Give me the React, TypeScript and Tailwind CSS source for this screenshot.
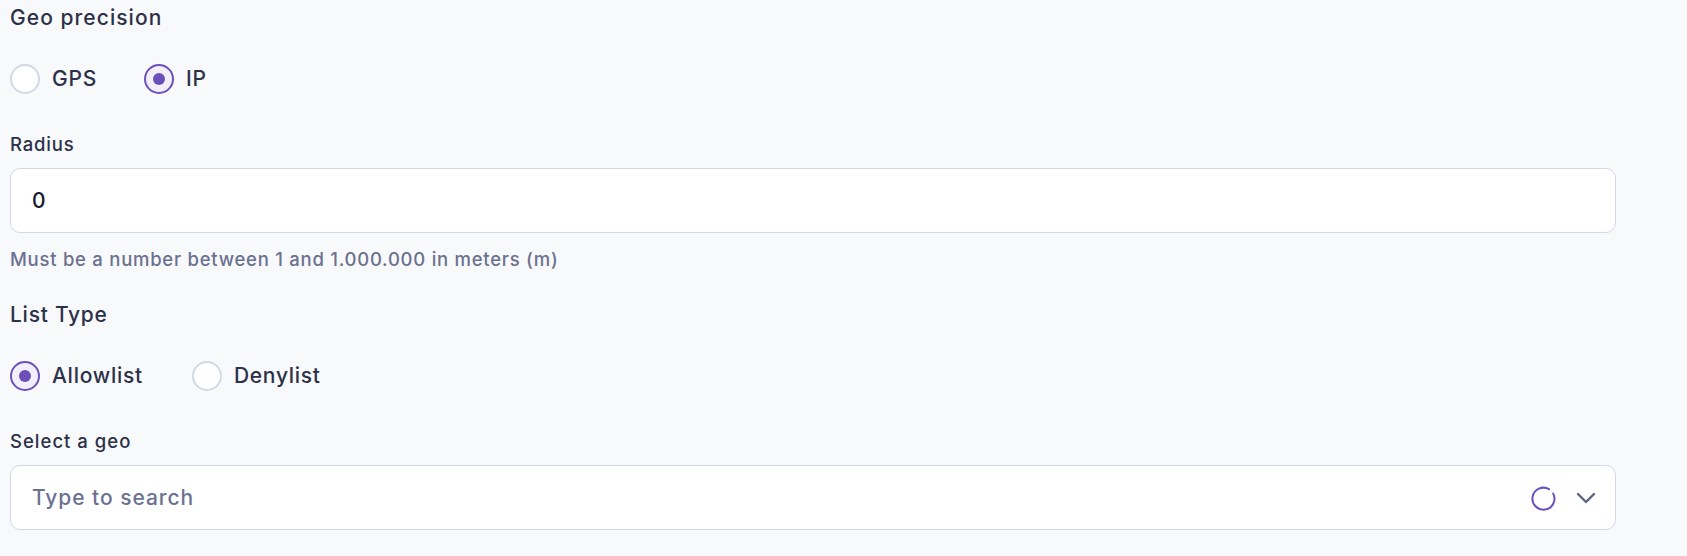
import { useState } from 'react'

function Radio({ label, checked, onClick }: { label: string; checked: boolean; onClick: () => void }) {
	return (
		<button type="button" onClick={onClick} className="flex items-center gap-[12px]">
			{checked ? (
				<span className="flex h-[30px] w-[30px] items-center justify-center rounded-full border-2 border-[#6b51b9] bg-[#f2effb]">
					<span className="h-[12px] w-[12px] rounded-full bg-[#6a50b8]" />
				</span>
			) : (
				<span className="h-[30px] w-[30px] rounded-full border-2 border-[#d3d8e7] bg-white" />
			)}
			<span className="text-[21px] leading-[28px] tracking-[0.035em] text-[#2c3149]">{label}</span>
		</button>
	)
}

function Spinner() {
	return (
		<svg width="26" height="26" viewBox="0 0 26 26" fill="none">
			<path d="M19 4.2 A11 11 0 1 0 23.2 8.6" stroke="#6a50c0" strokeWidth="2" strokeLinecap="round" />
		</svg>
	)
}

export default function App() {
	const [precision, setPrecision] = useState('ip')
	const [listType, setListType] = useState('allow')

	return (
		<div className="min-h-screen bg-[#f8f9fb] px-[10px] pt-[4px] font-['Inter',sans-serif] font-[450] text-[#2c3149]">
			<div className="flex w-[1606px] flex-col">
				<h3 className="text-[21px] leading-[28px] tracking-[0.05em]">Geo precision</h3>
				<div className="mt-[31.5px] flex items-center gap-[47px]">
					<Radio label="GPS" checked={precision === 'gps'} onClick={() => setPrecision('gps')} />
					<Radio label="IP" checked={precision === 'ip'} onClick={() => setPrecision('ip')} />
				</div>

				<label className="mt-[38.5px] text-[18.5px] leading-[24px] tracking-[0.045em]">Radius</label>
				<div className="mt-[12px] flex h-[65px] items-center rounded-[10px] border border-[#d4d7e8] bg-white px-[21px]">
					<span className="text-[21px] text-[#161a2b]">0</span>
				</div>
				<p className="mt-[14px] text-[18.5px] leading-[24px] tracking-[0.04em] text-[#6b7190]">
					Must be a number between 1 and 1.000.000 in meters (m)
				</p>

				<h3 className="mt-[30px] text-[21px] leading-[28px] tracking-[0.035em]">List Type</h3>
				<div className="mt-[31.5px] flex items-center gap-[49px]">
					<Radio label="Allowlist" checked={listType === 'allow'} onClick={() => setListType('allow')} />
					<Radio label="Denylist" checked={listType === 'deny'} onClick={() => setListType('deny')} />
				</div>

				<label className="mt-[38.5px] text-[18.5px] leading-[24px] tracking-[0.055em]">Select a geo</label>
				<div className="mt-[12px] flex h-[65px] items-center rounded-[10px] border border-[#d4d7e8] bg-white pl-[21px] pr-[19px]">
					<span className="flex-1 text-[21px] tracking-[0.045em] text-[#6b7192]">Type to search</span>
					<Spinner />
					<svg className="ml-[20px]" width="20" height="12" viewBox="0 0 20 12" fill="none">
						<path d="M2 2 L10 10 L18 2" stroke="#5b6482" strokeWidth="2.4" strokeLinecap="round" strokeLinejoin="round" />
					</svg>
				</div>
			</div>
		</div>
	)
}
